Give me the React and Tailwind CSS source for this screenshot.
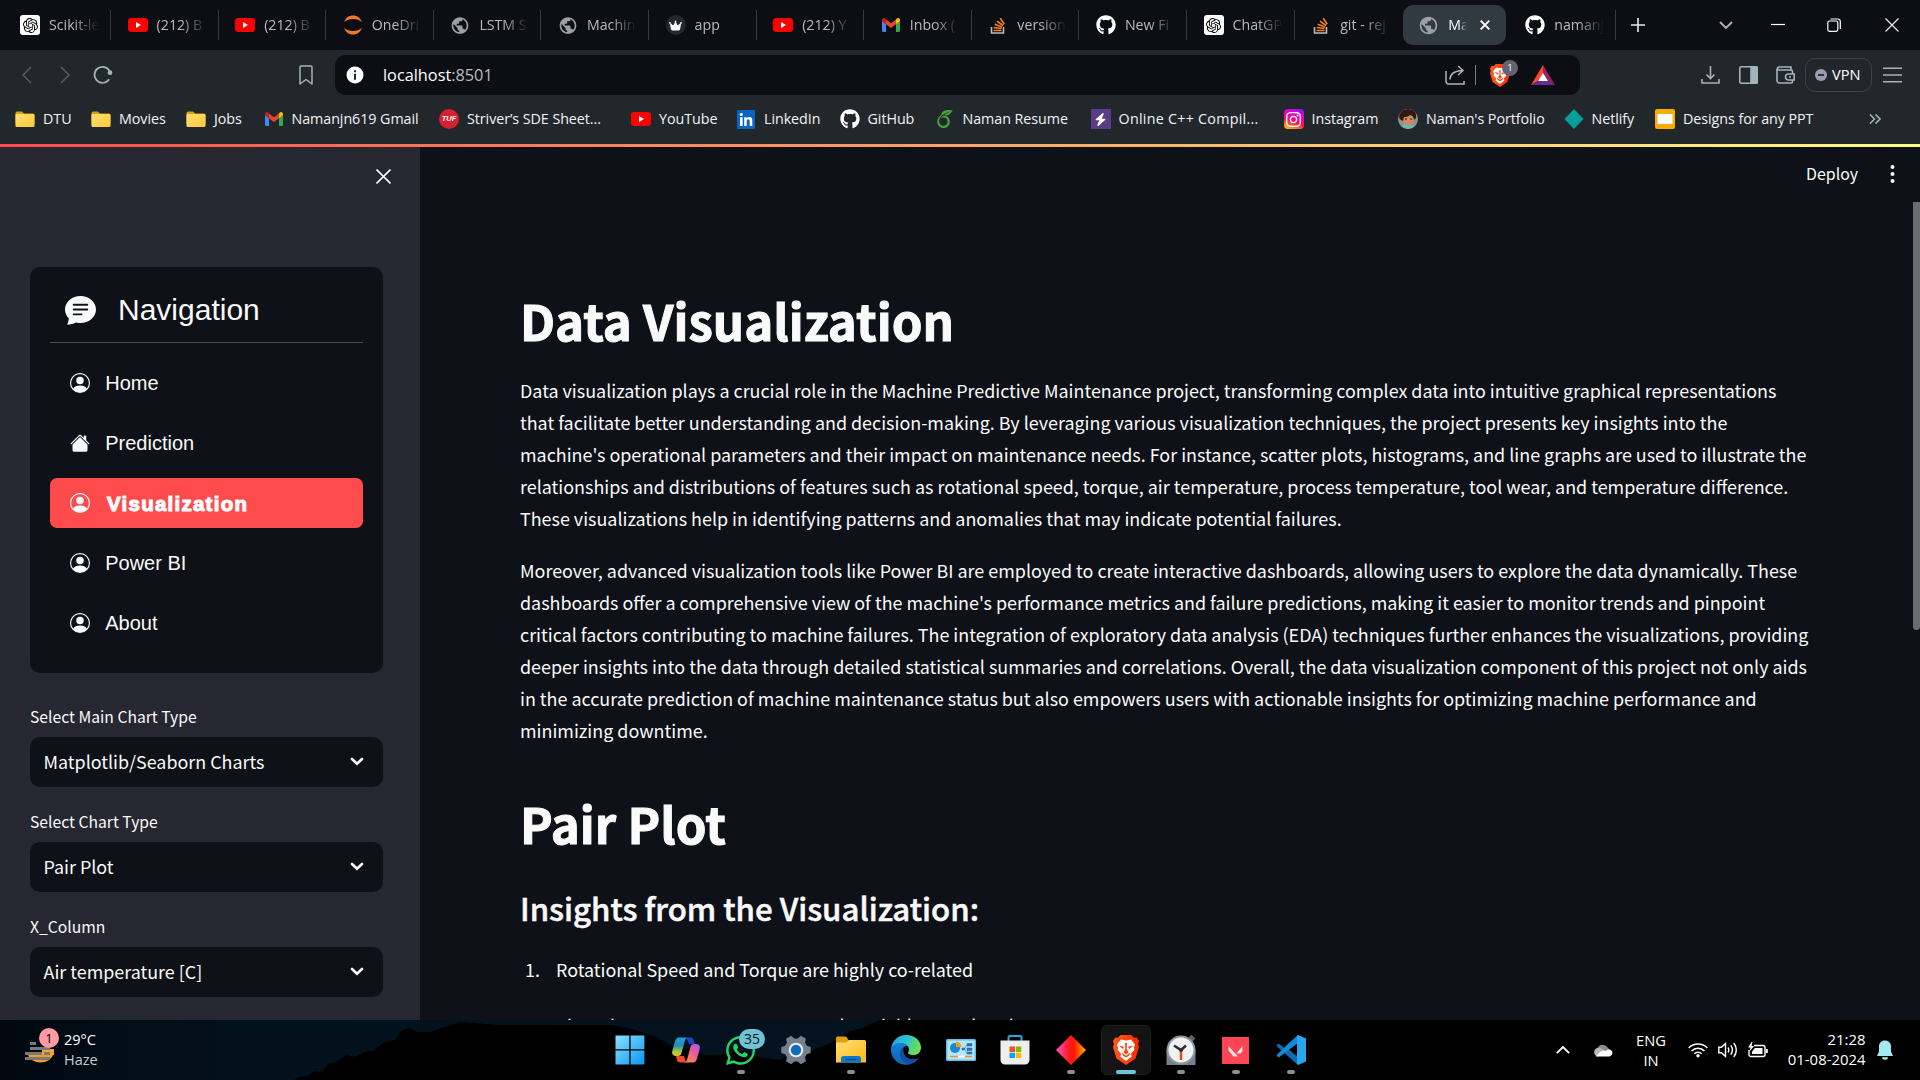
import React from 'react';
import { FaGithub, FaWhatsapp, FaCrown, FaBolt } from 'react-icons/fa6';
import { SiOpenai, SiOverleaf, SiInstagram } from 'react-icons/si';
import { BsPersonCircle, BsHouseFill, BsChatTextFill } from 'react-icons/bs';
import { MdPublic } from 'react-icons/md';

/* ---------- favicons ---------- */
const OpenAi = () => (
  <span className="flex size-5 items-center justify-center rounded-[3px] bg-white text-black"><SiOpenai size={15} /></span>
);
const YouTube = () => (
  <svg viewBox="0 0 20 20" className="size-5">
    <rect y="3" width="20" height="14" rx="3.2" fill="#ff0000" />
    <path d="M8 7v6l5-3z" fill="#fff" />
  </svg>
);
const Jupyter = () => (
  <svg viewBox="0 0 20 20" className="size-5" fill="#f37726">
    <path d="M1 7C3 2.500 6 .5 10 .5S17 2.500 19 7C16.500 5 13.500 4 10 4S3.500 5 1 7z" />
    <path d="M1 13c2 4.500 5 6.500 9 6.500s7-2 9-6.500c-2.500 2-5.500 3-9 3s-6.500-1-9-3z" />
  </svg>
);
const Globe = () => <MdPublic size={21} color="#9aa0a6" />;
const Crown = () => (
  <span className="flex size-5 items-center justify-center rounded-full bg-[#262730] text-white"><FaCrown size={13} /></span>
);
const Gmail = () => (
  <svg viewBox="0 0 20 20" className="size-5">
    <path d="M1 6v9.500A1.500 1.500 0 0 0 2.500 17H5V9z" fill="#4285f4" />
    <path d="M19 6v9.500a1.500 1.500 0 0 1-1.500 1.500H15V9z" fill="#34a853" />
    <path d="M15 4.500V9.300L19 6.300V5c0-2-2-2.700-3.300-1.500z" fill="#fbbc04" />
    <path d="M5 9.300V4.500l5 3.800 5-3.800v4.800l-5 3.800z" fill="#ea4335" />
    <path d="M1 5v1.300l4 3V4.500L4.300 3.500C3 2.300 1 3 1 5z" fill="#c5221f" />
  </svg>
);
const StackO = () => (
  <svg viewBox="0 0 20 20" className="size-5" fill="none">
    <path d="M3.500 12v6h12v-6" stroke="#bcbbbb" strokeWidth="1.600" />
    <path d="M5.500 15.500h8M5.700 12.500l7.800 1M6.700 9.300l7.400 2.600M9 6.200l6 4.300M12.300 3.300l4 6" stroke="#f48024" strokeWidth="1.600" />
  </svg>
);
const Git = () => <FaGithub size={20} color="#fff" />;

const tabs = [
  [OpenAi, 'Scikit-le'], [YouTube, '(212) B'], [YouTube, '(212) B'], [Jupyter, 'OneDri'], [Globe, 'LSTM S'],
  [Globe, 'Machin'], [Crown, 'app'], [YouTube, '(212) Y'], [Gmail, 'Inbox ('], [StackO, 'version'],
  [Git, 'New Fi'], [OpenAi, 'ChatGP'], [StackO, 'git - rej'],
];

function Tab({ Icon, label, sep }) {
  return (
    <div className="flex h-[50px] w-[107.6px] shrink-0 items-center pl-[16.500px]">
      <span className="flex w-5 shrink-0 justify-center"><Icon /></span>
      <span className="ml-[9px] w-[50px] whitespace-nowrap text-[14.200px] text-[#b8babe] [mask-image:linear-gradient(to_right,#000_48%,transparent_100%)]">{label}</span>
      {sep && <span className="ml-auto h-[30px] w-px bg-[#34373c]" />}
    </div>
  );
}

function TabStrip() {
  return (
    <div className="flex h-[50px] items-center bg-[#0d0e13] pl-[3.500px]">
      {tabs.map(([Icon, label], i) => <Tab key={i} Icon={Icon} label={label} sep={i < 12} />)}
      <div className="ml-px flex h-10 w-[103px] shrink-0 items-center rounded-[10px] bg-[#303a40] pl-[15px]">
        <Globe />
        <span className="ml-[9px] w-[19px] whitespace-nowrap text-[14.200px] text-white [mask-image:linear-gradient(to_right,#000_55%,transparent)]">Ma</span>
        <svg viewBox="0 0 10 10" className="ml-[13px] size-[10px]" stroke="#fff" strokeWidth="1.900"><path d="M.7.7l8.600 8.600M9.300.7L.7 9.300" /></svg>
      </div>
      <div className="ml-[2.500px]"><Tab Icon={Git} label="namanj" sep /></div>
      <svg viewBox="0 0 14 14" className="ml-[14.500px] size-[14px]" stroke="#e8eaed" strokeWidth="1.600"><path d="M7 0v14M0 7h14" /></svg>
      <svg viewBox="0 0 14 8" className="ml-[74px] h-2 w-[14px]" fill="none" stroke="#9fb0b8" strokeWidth="2"><path d="M1 1l6 6 6-6" /></svg>
      <svg viewBox="0 0 14 14" className="ml-[38px] size-[14px]" stroke="#fff" strokeWidth="1.200"><path d="M0 6.500h14" /></svg>
      <svg viewBox="0 0 14 14" className="ml-[42px] size-[14px]" fill="none" stroke="#fff" strokeWidth="1.200">
        <rect x=".8" y="3" width="10" height="10.300" rx="1.800" /><path d="M3.500 1h7.300A2.500 2.500 0 0 1 13.300 3.500V11" />
      </svg>
      <svg viewBox="0 0 14 14" className="ml-[44px] size-[14px]" stroke="#e8eaed" strokeWidth="1.200"><path d="M.5.5l13 13M13.500.5l-13 13" /></svg>
    </div>
  );
}

const Lion = ({ className }) => (
  <svg viewBox="0 0 26 30" className={className}>
    <defs><linearGradient id="lion" x1="0" x2="1"><stop offset="0" stopColor="#ff5a1c" /><stop offset="1" stopColor="#ff2a00" /></linearGradient></defs>
    <path d="M7.500 0h11l2.500 2.700 2.800-.3L26 6l-.9 3 .9 3-3.500 11.500L13 30 3.500 23.500 0 12l.9-3L0 6l2.200-3.600 2.800.3z" fill="url(#lion)" />
    <path d="M8 4.500l5 1 5-1 4 5-1.200 3.500.6 2-3.600 3.800 1 2.700-5.800 4.500-5.800-4.500 1-2.700L4.600 15l.6-2L4 9.500z" fill="#fff" />
    <path d="M5.500 10.500l5.500 1.300-1 2.200zM20.500 10.500L15 11.800l1 2.200zM12 8h2l-.3 6 1.800 3.300-2.500 2.200-2.500-2.200 1.800-3.300zM8.500 17.500l4.500 3.200 4.500-3.200-1.500 3.300-3 1.700-3-1.700z" fill="#ff4412" />
  </svg>
);

function Toolbar() {
  return (
    <div className="flex h-[50px] items-center bg-[#22272b] pl-[22px]">
      <svg viewBox="0 0 10 18" className="h-[18px] w-[10px]" fill="none" stroke="#565f64" strokeWidth="1.500"><path d="M9 1L1 9l8 8" /></svg>
      <svg viewBox="0 0 10 18" className="ml-[28px] h-[18px] w-[10px]" fill="none" stroke="#565f64" strokeWidth="1.500"><path d="M1 1l8 8-8 8" /></svg>
      <svg viewBox="0 0 20 20" className="ml-[23px] size-5" fill="none" stroke="#a3b3bb" strokeWidth="1.700">
        <path d="M16.200 14.200A8 8 0 1 1 16.800 6.500" /><circle cx="17" cy="7.700" r="2.400" fill="#a3b3bb" stroke="none" />
      </svg>
      <svg viewBox="0 0 14 20" className="ml-[186px] h-5 w-[14px]" fill="none" stroke="#a3b3bb" strokeWidth="1.500" strokeLinejoin="round">
        <path d="M1 2.200A1.200 1.200 0 0 1 2.200 1h9.600A1.200 1.200 0 0 1 13 2.200V19l-6-4.500L1 19z" />
      </svg>
      <div className="ml-[22px] flex h-10 w-[1245px] items-center rounded-[10px] bg-[#0d0e13] pl-[11px]">
        <svg viewBox="0 0 18 18" className="size-[18px]">
          <circle cx="9" cy="9" r="8.500" fill="#fff" /><path d="M9 4.200v2M9 7.700v6" stroke="#22272b" strokeWidth="2" />
        </svg>
        <span className="ml-[19px] text-[16.300px] text-white">localhost<span className="text-[#b9bcc2]">:8501</span></span>
        <svg viewBox="0 0 20 20" className="ml-auto size-5" fill="none" stroke="#aab4ba" strokeWidth="1.500">
          <path d="M1 6v10.500A2.500 2.500 0 0 0 3.500 19h15.500v-3M5 14.500C5 8.500 9 6 17 5.500M13 1l5 4.500-5 4.500" />
        </svg>
        <span className="ml-[10px] h-5 w-px bg-[#7a7f84]" />
        <div className="relative ml-[14px]">
          <Lion className="h-[23px] w-5" />
          <span className="absolute -top-[4px] left-[12px] flex size-[16px] items-center justify-center rounded-full bg-[#62636f] text-[9.500px] leading-none text-white">1</span>
        </div>
        <svg viewBox="0 0 24 20" className="ml-[21px] mr-[25px] h-5 w-6">
          <path d="M12 0L0 20l7-4 5-8z" fill="#ff4724" /><path d="M12 0l12 20-7-4-5-8z" fill="#9e1f63" /><path d="M0 20h24l-7-4.200H7z" fill="#662d91" />
          <path d="M12 7.800L17 16H7z" fill="#fff" />
        </svg>
      </div>
      <svg viewBox="0 0 19 18" className="ml-[121px] h-[18px] w-[19px]" fill="none" stroke="#a3b3bb" strokeWidth="1.600"><path d="M9.500 0v12M5.500 8.500l4 4 4-4M1 13v4h17v-4" /></svg>
      <svg viewBox="0 0 19 18" className="ml-[18.500px] h-[18px] w-[19px]" fill="none" stroke="#a3b3bb" strokeWidth="1.600"><rect x=".8" y=".8" width="17.400" height="16.400" rx="1.500" /><rect x="12" y="1" width="6" height="16" fill="#a3b3bb" /></svg>
      <svg viewBox="0 0 19 18" className="ml-[18px] h-[18px] w-[19px]" fill="none" stroke="#a3b3bb" strokeWidth="1.600">
        <path d="M16.500 8V5.500A1.500 1.500 0 0 0 15 4H3A1.500 1.500 0 0 1 3 1h12v3M1 2.500v12A2.500 2.500 0 0 0 3.500 17H15a1.500 1.500 0 0 0 1.500-1.500V14M18.200 8H12.500a3 3 0 0 0 0 6h5.700zM13 11h2" />
      </svg>
      <div className="ml-[10px] flex h-[34px] w-[67px] items-center rounded-[10px] border border-[#3b4548] pl-[9.500px]">
        <svg viewBox="0 0 12 12" className="size-3"><circle cx="6" cy="6" r="6" fill="#9b9bb5" /><path d="M3 6h6" stroke="#22272b" strokeWidth="1.800" /></svg>
        <span className="ml-[5px] text-[14.600px] text-white">VPN</span>
      </div>
      <svg viewBox="0 0 19 16" className="ml-[11px] h-4 w-[19px]" stroke="#a3b3bb" strokeWidth="1.500"><path d="M0 1.300h19M0 8h19M0 14.700h19" /></svg>
    </div>
  );
}

const BFolder = () => (
  <svg viewBox="0 0 20 20" className="size-5">
    <defs><linearGradient id="bf" x1="0" y1="0" x2="1" y2="1"><stop offset="0" stopColor="#ffdf73" /><stop offset="1" stopColor="#fcc93a" /></linearGradient></defs>
    <path d="M.5 4a1.500 1.500 0 0 1 1.500-1.500h5l2 2h9a1.500 1.500 0 0 1 1.500 1.500v9H.5z" fill="#d9a010" />
    <rect x=".5" y="5" width="19" height="13" rx="1.300" fill="url(#bf)" />
  </svg>
);
const Tuf = () => (
  <span className="flex size-5 items-center justify-center rounded-full bg-[#d61f30] font-['Liberation_Sans'] text-[7.500px] font-bold italic leading-none text-white">TUF</span>
);
const LinkedIn = () => (
  <svg viewBox="0 0 18 19" className="h-[19px] w-[18px]">
    <rect width="18" height="19" rx="1.200" fill="#0a66c2" />
    <circle cx="4.300" cy="4.500" r="1.600" fill="#fff" />
    <path d="M3 7.200h2.600V16H3zM7.200 7.200h2.500v1.200c.5-.9 1.500-1.400 2.600-1.400 2.500 0 3 1.700 3 3.900V16h-2.600v-4.500c0-1.100 0-2.300-1.400-2.300s-1.600 1.100-1.600 2.300V16H7.200z" fill="#fff" />
  </svg>
);
const Insta = () => (
  <span className="flex size-5 items-center justify-center rounded-[4px] bg-[linear-gradient(20deg,#ffc400_5%,#ff0a5c_40%,#e600c8_65%,#7a1cff_100%)] text-white"><SiInstagram size={15} /></span>
);
const Bolt = () => <span className="flex size-5 items-center justify-center bg-[#5a3e85] text-white"><FaBolt size={13} /></span>;
const Avatar = () => (
  <svg viewBox="0 0 20 20" className="size-5">
    <defs><clipPath id="av"><circle cx="10" cy="10" r="10" /></clipPath></defs>
    <g clipPath="url(#av)">
      <rect width="20" height="20" fill="#8d948d" />
      <path d="M2 20c1-4 4-5 8-5s7 1 8 5z" fill="#5fc0b4" />
      <path d="M5 6c0 7 1 11 5.500 11S16 12 16 6z" fill="#d28a62" />
      <path d="M1.500 10C0 4 4 0 10 0s9 3 8 9l-2 2c0-3-2-4.500-4-5-2 2-5 2-6 2l-1 4z" fill="#33190f" />
      <path d="M7 10h2M12 10h2" stroke="#2a1510" strokeWidth="1.200" />
    </g>
  </svg>
);
const Netlify = () => <svg viewBox="0 0 20 20" className="size-5"><path d="M10 0l9.500 10L10 20 .5 10z" fill="#05a09a" /></svg>;
const Slides = () => <svg viewBox="0 0 20 20" className="size-5"><rect width="20" height="20" rx="2" fill="#f9ab00" /><rect x="2.500" y="5" width="15" height="10" fill="#fff" /></svg>;
const Leaf = () => <SiOverleaf size={18} color="#47a141" />;

const bookmarks = [
  [BFolder, 'DTU', 'w-[76px]'], [BFolder, 'Movies', 'w-[95px]'], [BFolder, 'Jobs', 'w-[77.500px]'], [Gmail, 'Namanjn619 Gmail', 'w-[175.500px]'],
  [Tuf, 'Striver’s SDE Sheet...', 'w-[192px]'], [YouTube, 'YouTube', 'w-[105px]'], [LinkedIn, 'LinkedIn', 'w-[103.500px]'],
  [Git, 'GitHub', 'w-[95px]'], [Leaf, 'Naman Resume', 'w-[156px]'], [Bolt, 'Online C++ Compil...', 'w-[193px]'],
  [Insta, 'Instagram', 'w-[114.500px]'], [Avatar, "Naman's Portfolio", 'w-[165.500px]'], [Netlify, 'Netlify', 'w-[91.500px]'],
  [Slides, 'Designs for any PPT', 'w-[213.500px]'],
];

function Bookmarks() {
  return (
    <div className="flex h-[44px] items-center bg-[#22272b] pb-[6px] pl-[15px]">
      {bookmarks.map(([Icon, label, w]) => (
        <div key={label} className={`flex shrink-0 items-center ${w}`}>
          <span className="flex w-5 shrink-0 justify-center"><Icon /></span>
          <span className={label.startsWith('Online') ? 'ml-2 whitespace-nowrap text-[14.300px] tracking-[0.260px] text-[#f2f3f4]' : 'ml-2 whitespace-nowrap text-[14.300px] tracking-[-0.060px] text-[#f2f3f4]'}>{label}</span>
        </div>
      ))}
      <svg viewBox="0 0 12 10" className="h-[10px] w-3" fill="none" stroke="#9fb0b8" strokeWidth="1.600"><path d="M1 .5L5.500 5 1 9.500M6.500.5L11 5 6.500 9.500" /></svg>
    </div>
  );
}

/* ---------- page ---------- */
const nav = [['Home', BsPersonCircle], ['Prediction', BsHouseFill], ['Visualization', BsPersonCircle], ['Power BI', BsPersonCircle], ['About', BsPersonCircle]];

function Select({ label, value }) {
  return (
    <div className="mb-[25px] flex flex-col">
      <span className="flex h-[30px] items-start text-[15.700px] leading-[20px]">{label}</span>
      <div className="flex h-[50px] items-center justify-between rounded-[10px] bg-[#0e1117] pb-px pl-[13.500px] pr-[19px]">
        <span className="pb-[2px] text-[17.900px] leading-[30px]">{value}</span>
        <svg viewBox="0 0 14 9" className="h-[9px] w-[14px]" fill="none" stroke="#fafafa" strokeWidth="2.600" strokeLinecap="round"><path d="M2 2l5 4.800L12 2" /></svg>
      </div>
    </div>
  );
}

function Sidebar() {
  return (
    <aside className="flex w-[420px] shrink-0 flex-col bg-[#262730] px-[30px] font-['Noto_Sans_CJK_SC',sans-serif] text-[#fafafa]">
      <div className="flex h-[120px] shrink-0 justify-end pt-[22px]">
        <svg viewBox="0 0 14 14" className="mr-[-1px] size-[15px]" stroke="#fafafa" strokeWidth="1.500"><path d="M.5.5l13 13M13.500.5l-13 13" /></svg>
      </div>
      <div className="h-[405.500px] w-[353px] shrink-0 rounded-[10px] bg-[#0e1117] px-5 font-['Liberation_Sans',sans-serif]">
        <div className="flex h-[76px] items-center border-b border-[#4a4c50] pl-[15px] pt-[10px]">
          <BsChatTextFill size={31} />
          <span className="ml-[22px] text-[30px] leading-[40px]">Navigation</span>
        </div>
        <div className="mt-[15px] flex flex-col gap-[10px]">
          {nav.map(([label, Icon]) => {
            const on = label === 'Visualization';
            return (
              <div key={label} className={on ? 'flex h-[50px] items-center rounded-[7px] bg-[#ff4b4b] pl-5 text-white' : 'flex h-[50px] items-center pl-5'}>
                <Icon size={20} />
                <span className={on ? 'ml-[17px] pt-px text-[20.500px] font-bold leading-[30px] tracking-[1.250px] [-webkit-text-stroke:1.1px_white]' : 'ml-[15.200px] text-[20px] leading-[30px]'}>{label}</span>
              </div>
            );
          })}
        </div>
      </div>
      <div className="mt-[34.500px] w-[353px]">
        <Select label="Select Main Chart Type" value="Matplotlib/Seaborn Charts" />
        <Select label="Select Chart Type" value="Pair Plot" />
        <Select label="X_Column" value="Air temperature [C]" />
      </div>
    </aside>
  );
}

function Main() {
  return (
    <main className="flex flex-1 overflow-hidden bg-[#0e1117] font-['Noto_Sans_CJK_SC',sans-serif] text-[#fafafa]">
      <div className="flex flex-1 flex-col">
        <div className="flex h-[54px] shrink-0 items-center justify-end pr-[18px]">
          <span className="text-[15.900px]">Deploy</span>
          <svg viewBox="0 0 5 20" className="ml-[32px] h-5 w-[5px]" fill="#fafafa"><circle cx="2.500" cy="3" r="2" /><circle cx="2.500" cy="10" r="2" /><circle cx="2.500" cy="17" r="2" /></svg>
        </div>
        <div className="ml-[100px] mt-[85.500px] w-[1300px] shrink-0">
          <h1 className="text-[49.200px] font-bold leading-[66px] [-webkit-text-stroke:1px_#fafafa]">Data Visualization</h1>
          <div className="mt-[21.500px] flex flex-col gap-5 whitespace-nowrap text-[17.910px] leading-[32px]">
            <p>
              Data visualization plays a crucial role in the Machine Predictive Maintenance project, transforming complex data into intuitive graphical representations<br />
              that facilitate better understanding and decision-making. By leveraging various visualization techniques, the project presents key insights into the<br />
              machine's operational parameters and their impact on maintenance needs. For instance, scatter plots, histograms, and line graphs are used to illustrate the<br />
              relationships and distributions of features such as rotational speed, torque, air temperature, process temperature, tool wear, and temperature difference.<br />
              These visualizations help in identifying patterns and anomalies that may indicate potential failures.
            </p>
            <p>
              Moreover, advanced visualization tools like Power BI are employed to create interactive dashboards, allowing users to explore the data dynamically. These<br />
              dashboards offer a comprehensive view of the machine's performance metrics and failure predictions, making it easier to monitor trends and pinpoint<br />
              critical factors contributing to machine failures. The integration of exploratory data analysis (EDA) techniques further enhances the visualizations, providing<br />
              deeper insights into the data through detailed statistical summaries and correlations. Overall, the data visualization component of this project not only aids<br />
              in the accurate prediction of machine maintenance status but also empowers users with actionable insights for optimizing machine performance and<br />
              minimizing downtime.
            </p>
          </div>
          <h1 className="mt-[44px] text-[49.200px] font-bold leading-[66px] [-webkit-text-stroke:1px_#fafafa]">Pair Plot</h1>
          <h2 className="mt-[31px] text-[31.200px] font-medium leading-[42px] [-webkit-text-stroke:0.5px_#fafafa]">Insights from the Visualization:</h2>
          <ol className="mt-[24px] flex flex-col gap-6 text-[17.910px] leading-[32px]">
            <li className="flex"><span className="w-[36px] pl-[5px]">1.</span>Rotational Speed and Torque are highly co-related</li>
            <li className="flex"><span className="w-[36px] pl-[5px]">2.</span>Air and Process Temperature are also Highly Correlated</li>
          </ol>
        </div>
      </div>
      <div className="flex w-[7px] flex-col pt-[55px]">
        <div className="h-[428px] rounded-b-[4px] bg-[#6b6c70]" />
      </div>
    </main>
  );
}

/* ---------- taskbar ---------- */
const WinLogo = () => (
  <svg viewBox="0 0 30 30" className="mr-[2px] size-[30px]">
    <defs><linearGradient id="win" gradientUnits="userSpaceOnUse" x1="0" y1="0" x2="30" y2="30"><stop offset="0" stopColor="#8de4ff" /><stop offset="1" stopColor="#0793f2" /></linearGradient></defs>
    <path d="M.5.500h13.800v13.800H.5zM15.600.5h13.800v13.800H15.600zM.5 15.600h13.800v13.800H.5zM15.600 15.600h13.800v13.800H15.600z" fill="url(#win)" />
  </svg>
);
const Copilot = () => (
  <svg viewBox="0 0 28 26" className="h-[26px] w-7">
    <defs>
      <linearGradient id="cp1" x1="0" y1="0" x2="0" y2="1"><stop offset="0" stopColor="#1a9fe0" /><stop offset=".45" stopColor="#2a8fb0" /><stop offset=".75" stopColor="#9acb3f" /><stop offset="1" stopColor="#f5b820" /></linearGradient>
      <linearGradient id="cp2" x1="1" y1="0" x2="0.2" y2="1"><stop offset="0" stopColor="#a45ae8" /><stop offset=".45" stopColor="#e85aa0" /><stop offset="1" stopColor="#ff8a4a" /></linearGradient>
    </defs>
    <path d="M14 .5h4.500c2 0 2.800 1.300 3.300 3l1 3.500H17z" fill="#1b44c4" />
    <path d="M8 25.500c-2 0-2.600-1.200-3.200-3L4 19h8l2 6.500z" fill="#ee4a30" />
    <path d="M7 .5h9c-1.500 0-2.500 1-3 2.800L9.500 16c-.6 2.200-1.600 3-3.700 3H4c-3.200 0-4.500-2-3.600-5.500L3 4.500C3.800 1.800 5 .5 7 .5z" fill="url(#cp1)" />
    <path d="M21 25.500h-9c1.500 0 2.500-1 3-2.800L18.500 10c.6-2.200 1.600-3 3.700-3H24c3.200 0 4.500 2 3.600 5.500L25 21.500c-.8 2.700-2 4-4 4z" fill="url(#cp2)" />
  </svg>
);
const WhatsApp = () => (
  <div className="relative">
    <FaWhatsapp size={33} color="#25d366" />
    <span className="absolute -top-[5px] left-[15px] flex h-5 w-[26px] items-center justify-center rounded-full bg-[#6fc3d6] text-[14px] leading-none text-[#06151b]">35</span>
  </div>
);
const Gear = () => (
  <svg viewBox="0 0 30 30" className="size-[30px]">
    <g fill="#76808a">
      <circle cx="15" cy="15" r="11.500" />
      {[0, 60, 120].map((a) => <path key={a} d="M12 0.300h6l1.500 5v19.400l-1.500 5h-6l-1.500-5V5.300z" transform={`rotate(${a + 30} 15 15)`} />)}
    </g>
    <circle cx="15" cy="15" r="7.300" fill="#e6ebf0" /><circle cx="15" cy="15" r="5.200" fill="#0f6cbd" />
  </svg>
);
const Explorer = () => (
  <svg viewBox="0 0 30 28" className="h-7 w-[30px]">
    <defs><linearGradient id="ex" x1="0" y1="0" x2="1" y2="1"><stop offset="0" stopColor="#ffe07a" /><stop offset="1" stopColor="#fdb90e" /></linearGradient></defs>
    <path d="M0 2A1.500 1.500 0 0 1 1.500.5H10l3 4v5H0z" fill="#dfa00a" /><path d="M0 6.500h10.500L13 4h15.500A1.500 1.500 0 0 1 30 5.500V26.500H0z" fill="url(#ex)" />
    <path d="M5 26.500v-4A2.500 2.500 0 0 1 7.500 20h15a2.500 2.500 0 0 1 2.500 2.500v4z" fill="#1078cc" /><path d="M9.500 23.500h11" stroke="#0a4d8c" strokeWidth="1.300" />
  </svg>
);
const Edge = () => (
  <svg viewBox="0 0 30 30" className="size-[30px]">
    <defs>
      <linearGradient id="ed1" x1="0" y1="0" x2="1" y2=".3"><stop offset="0" stopColor="#1f9fe0" /><stop offset=".55" stopColor="#2cc3d6" /><stop offset="1" stopColor="#6be050" /></linearGradient>
      <linearGradient id="ed2" x1="0" y1="0" x2="0" y2="1"><stop offset="0" stopColor="#1380d8" /><stop offset="1" stopColor="#0f64b8" /></linearGradient>
    </defs>
    <path d="M0 14C.8 6 7 0 15 0c9 0 15 6 15 12.500 0 5-3.500 7.500-7.500 7.500-4 0-5.500-1.300-5.500-2.300 0-.8 1-1.200 1-3.200C18 11 14.500 8.500 10 8.500 5 8.500 1 11 0 14z" fill="url(#ed1)" />
    <path d="M0 14c1.500-4 5-6 9.500-6 3 0 5.500 1 7 2.700-4.500.3-6 3.500-6 7.800 0 5 4 9.500 8.500 10.800A15 15 0 0 1 0 14z" fill="url(#ed2)" />
    <path d="M13 11.500C9 14 8 18 9.500 22c2 4.800 6 7.300 9.800 7.300 3.700-1.100 6.600-3.300 8.400-6.400-6 2.600-14.700 1.100-15.200-6.400-.1-2 .1-3.500.5-5z" fill="#11509c" />
  </svg>
);
const ControlPanel = () => (
  <svg viewBox="0 0 30 22" className="h-[22px] w-[30px]">
    <rect width="30" height="22" rx="1.500" fill="#5bc0ec" /><rect x="1.500" y="1.500" width="27" height="19" fill="#b5e6fa" />
    <circle cx="9" cy="9" r="5" fill="#1c86d6" /><path d="M10 8V2.500A5.500 5.500 0 0 1 15.500 8z" fill="#ff9a1c" />
    <path d="M4 17.500h8M19 17.500h7" stroke="#f09020" strokeWidth="1.600" /><path d="M12 17.500h7" stroke="#fff" strokeWidth="1.600" />
    <path d="M21 4.500h5v2.500h-5zM21 9h5v2.500h-5zM21 13h5v2h-5zM16 9h2.500v2H16zM18.500 10L21 5.500M18.500 10l2.500 4" fill="#2a6fb5" stroke="#2a6fb5" strokeWidth=".6" />
  </svg>
);
const Store = () => (
  <svg viewBox="0 0 30 30" className="mr-px size-[30px]">
    <path d="M8.500 6V2.500A1.500 1.500 0 0 1 10 1h10a1.500 1.500 0 0 1 1.500 1.500V6" fill="none" stroke="#2aa5e8" strokeWidth="2" />
    <path d="M.5 5.500h29V25a4.500 4.500 0 0 1-4.500 4.500H5A4.500 4.500 0 0 1 .5 25z" fill="#eeeeef" />
    <path d="M9.500 11.500h5.500v5.500H9.500z" fill="#f25022" /><path d="M15.800 11.500h5.500v5.500h-5.500z" fill="#7fba00" /><path d="M9.500 17.800h5.500v5.200H9.500z" fill="#00a4ef" /><path d="M15.800 17.800h5.500v5.200h-5.500z" fill="#ffb900" />
  </svg>
);
const Diamond = () => (
  <svg viewBox="0 0 30 30" className="size-[30px]">
    <defs><linearGradient id="dm" x1="0" x2="1"><stop offset="0" stopColor="#ff4fd0" /><stop offset=".45" stopColor="#ff1a1a" /><stop offset=".6" stopColor="#ff1500" /><stop offset="1" stopColor="#ffb400" /></linearGradient></defs>
    <path d="M15 0l15 15-15 15L0 15z" fill="url(#dm)" />
  </svg>
);
const Clock = () => (
  <svg viewBox="0 0 30 30" className="size-[30px]">
    <path d="M24 1l4 4M26 6l-2-2" stroke="#5c646b" strokeWidth="4" /><path d="M.5 15v15h29V15z" fill="#74808a" />
    <circle cx="15" cy="15" r="14.500" fill="#8c969e" /><circle cx="15" cy="15" r="12.500" fill="#f0f1f2" />
    <path d="M15 15v10" stroke="#e04a1a" strokeWidth="2.400" /><path d="M8 10.500l7 4.500 5-4.500" stroke="#2c3035" strokeWidth="2.600" fill="none" /><circle cx="15" cy="15" r="2" fill="#2c3035" />
  </svg>
);
const Valorant = () => (
  <svg viewBox="0 0 27 27" className="mr-px size-[27px]"><rect width="27" height="27" fill="#fd4556" /><path d="M6.500 9v4.500l5 6h4.500zM20.500 9v5l-2 2.500h-4z" fill="#ece6e0" /></svg>
);
const VsCode = () => (
  <svg viewBox="0 0 30 30" className="size-[30px]">
    <path d="M22 0L8.500 13 3 8.800 1 9.800v1.700L22 30v-8L9 11.500z" fill="#0a6cb5" />
    <path d="M22 0v8L3 22.200l-2-1v-1.700z" fill="#1489d6" /><path d="M22 0l8 3.500v23L22 30l-1-1V1z" fill="#2ba4ee" />
  </svg>
);

const apps = [
  [WinLogo, ''], [Copilot, ''], [WhatsApp, 'dot'], [Gear, ''], [Explorer, 'dot'], [Edge, ''], [ControlPanel, ''], [Store, ''],
  [Diamond, 'dot'], [() => <Lion className="h-[30px] w-[26px]" />, 'active'], [Clock, 'dot'], [Valorant, 'dot'], [VsCode, 'dot'],
];

function Taskbar() {
  return (
    <footer className="relative flex h-[60px] items-center bg-black text-white">
      <svg viewBox="0 0 1920 60" className="absolute inset-0 h-[60px] w-[1920px]">
        <defs><linearGradient id="sky" x1="0" x2="1"><stop offset="0" stopColor="#010810" /><stop offset=".25" stopColor="#03111d" /><stop offset="1" stopColor="#04131f" /></linearGradient></defs>
        <path d="M0 0H880L862 8l-12 3-10 7-12 6-20 8-18 2-10 6-22-3-16-6-20 4-18 0-14-6-16-2-18-10-24-8-20-4H500l-40-3-30 10-13 0-8-4-8 3-6 9-12 3-9 8-6 0-14 6-8-2-8 6-10 3-6 8-7-1-8 5-8 1-8 5-12 1H0z" fill="url(#sky)" />
      </svg>
      <div className="relative flex w-[603px] items-center pl-[25px]">
        <div className="relative flex h-[60px] w-[39px] items-center">
          <svg viewBox="0 0 30 26" className="mt-[3px] h-[26px] w-[30px]">
            <path d="M2 14h27a14 13 0 0 1-27 0z" fill="#f59a22" /><path d="M17 10h12v6H17z" fill="#f5a52a" />
            <path d="M5 4.500h6M5 9.500h20M0 14.500h17M19 14.500h6M0 19.500h25" stroke="#77797c" strokeWidth="2.800" />
          </svg>
          <span className="absolute left-[14px] top-[8px] flex size-5 items-center justify-center rounded-full bg-[#ff99a4] text-[13px] leading-none text-black">1</span>
        </div>
        <div className="flex flex-col pb-px text-[14.500px] leading-5"><span>29°C</span><span className="text-[#c8cacc]">Haze</span></div>
      </div>
      <div className="relative flex">
        {apps.map(([Icon, s], i) => (
          <div key={i} className="flex w-[55px] justify-center">
            <div className={s === 'active' ? 'relative flex size-[50px] items-center justify-center rounded-[6px] border border-[#1e1e1e] bg-[#141414]' : 'relative flex size-[50px] items-center justify-center'}>
              <Icon />
              {s === 'dot' && <span className="absolute bottom-px h-1 w-2 rounded-full bg-[#8d8d8d]" />}
              {s === 'active' && <span className="absolute bottom-0 h-1 w-5 rounded-full bg-[#6fc3d6]" />}
            </div>
          </div>
        ))}
      </div>
      <div className="relative ml-[238px] flex items-center">
        <svg viewBox="0 0 14 8" className="h-2 w-[14px]" fill="none" stroke="#fff" strokeWidth="1.800"><path d="M.8 7.200L7 1l6.200 6.200" /></svg>
        <svg viewBox="0 0 20 14" className="ml-[22.500px] h-[14px] w-5">
          <path d="M5 9a5 5 0 0 1 1-6 6 6 0 0 1 9 2l4 4z" fill="#8c8c8c" /><path d="M4.500 13.500a4.400 4.400 0 0 1 0-8.500c3-.6 5 1 8 4z" fill="#b9b9b9" />
          <path d="M3 13.500h13.500a3.500 3.500 0 0 0 .5-6.800c-2-.4-3 .5-4 1.300C9 6.500 7 9 3 13.500z" fill="#fff" />
        </svg>
        <div className="ml-[20.500px] flex w-[36px] flex-col items-center pb-px text-[14.700px] leading-5"><span>ENG</span><span>IN</span></div>
        <svg viewBox="0 0 20 16" className="ml-[19px] h-4 w-5" fill="none" stroke="#fff" strokeWidth="1.500"><path d="M.7 6a13 13 0 0 1 18.600 0M3.500 9a9 9 0 0 1 13 0M6.300 11.700a5.200 5.200 0 0 1 7.400 0" /><circle cx="10" cy="13.800" r="1.700" fill="#fff" stroke="none" /></svg>
        <svg viewBox="0 0 20 16" className="ml-[10px] h-4 w-5" fill="none" stroke="#fff" strokeWidth="1.400"><path d="M.8 5.200h2.700L7.500 1.500v13l-4-3.700H.8zM10 5.500q1.600 2.500 0 5M12.800 3.300q3.200 4.700 0 9.400M15.800 1q5 7 0 14" /></svg>
        <svg viewBox="0 0 20 16" className="ml-[10px] h-4 w-5" fill="none" stroke="#fff" strokeWidth="1.400">
          <path d="M6 3.500h9A2 2 0 0 1 17 5.500v7a2 2 0 0 1-2 2H3a2 2 0 0 1-2-2V8" /><path d="M7 6h7.500v6H4V9.500z" fill="#fff" stroke="none" /><path d="M18.800 7v4" strokeWidth="2" /><path d="M3.500 0L0 5.500h2.500L1.500 9.500 6 4H3.500L4.500 0z" fill="#fff" stroke="none" />
        </svg>
        <div className="ml-[11.500px] flex w-[86px] flex-col items-end pb-[2px] text-[14.900px] leading-5"><span>21:28</span><span>01-08-2024</span></div>
        <svg viewBox="0 0 16 20" className="ml-[11px] h-5 w-4" fill="#a5e9f0"><path d="M8 .5c3.500 0 6 2.500 6 6v5l2 4.500H0l2-4.500v-5c0-3.500 2.500-6 6-6zM5 17.200h6a3 2.500 0 0 1-6 0z" /></svg>
      </div>
    </footer>
  );
}

export default function App() {
  return (
    <div className="flex h-[1080px] w-[1920px] flex-col overflow-hidden bg-[#0e1117] font-['Open_Sans',sans-serif]">
      <TabStrip />
      <Toolbar />
      <Bookmarks />
      <div className="h-[3px] bg-[linear-gradient(90deg,#ff4b4b,#fffd80)]" />
      <div className="flex h-[873px] overflow-hidden">
        <Sidebar />
        <Main />
      </div>
      <Taskbar />
    </div>
  );
}
